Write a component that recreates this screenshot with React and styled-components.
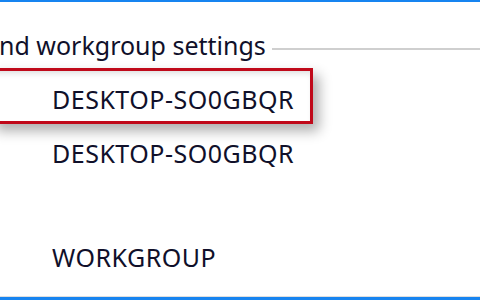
import React from 'react'
import styled, { createGlobalStyle } from 'styled-components'

const GlobalStyle = createGlobalStyle`
  html, body {
    margin: 0;
    padding: 0;
    background: #ffffff;
  }
`

function App() {
  return (
    <Frame>
      <GlobalStyle />
      <AccentBar />
      <Content>
        <GroupHeader>
          <GroupTitle>nd workgroup settings</GroupTitle>
          <Rule />
        </GroupHeader>
        <Highlight>
          <Value>DESKTOP-SO0GBQR</Value>
        </Highlight>
        <Field top={14}>
          <Value>DESKTOP-SO0GBQR</Value>
        </Field>
        <Field top={74}>
          <Value>WORKGROUP</Value>
        </Field>
      </Content>
      <BottomEdge />
      <AccentBar thick />
    </Frame>
  )
}

export default App

const Frame = styled.div`
  width: 480px;
  height: 300px;
  display: flex;
  flex-direction: column;
  overflow: hidden;
  background: #ffffff;
  font-family: 'Noto Sans', 'Open Sans', sans-serif;
  color: #10102a;
`

const AccentBar = styled.div`
  height: ${(p) => (p.thick ? '3px' : '2px')};
  background: #1784f0;
  flex-shrink: 0;
`

const Content = styled.div`
  flex: 1;
  display: flex;
  flex-direction: column;
  padding-top: 28px;
`

const GroupHeader = styled.div`
  display: flex;
  align-items: flex-start;
  margin-left: -1px;
`

const GroupTitle = styled.div`
  font-size: 25px;
  line-height: 30px;
  white-space: nowrap;
`

const Rule = styled.div`
  flex: 1;
  height: 2px;
  background: #cfcfcf;
  margin: 18px 0 0 6px;
`

const Highlight = styled.div`
  margin: 8px 0 0 -10px;
  width: 323px;
  height: 56px;
  box-sizing: border-box;
  border: 3px solid #c0091a;
  padding: 13px 0 0 59px;
  box-shadow: 6px 7px 12px rgba(0, 0, 0, 0.32), inset 0 5px 6px -3px rgba(0, 0, 0, 0.14);
`

const Field = styled.div`
  margin-top: ${(p) => p.top}px;
  padding-left: 52px;
`

const Value = styled.div`
  font-size: 25px;
  line-height: 30px;
  letter-spacing: 0.5px;
  white-space: nowrap;
`

const BottomEdge = styled.div`
  height: 1px;
  background: #dedede;
  flex-shrink: 0;
`
